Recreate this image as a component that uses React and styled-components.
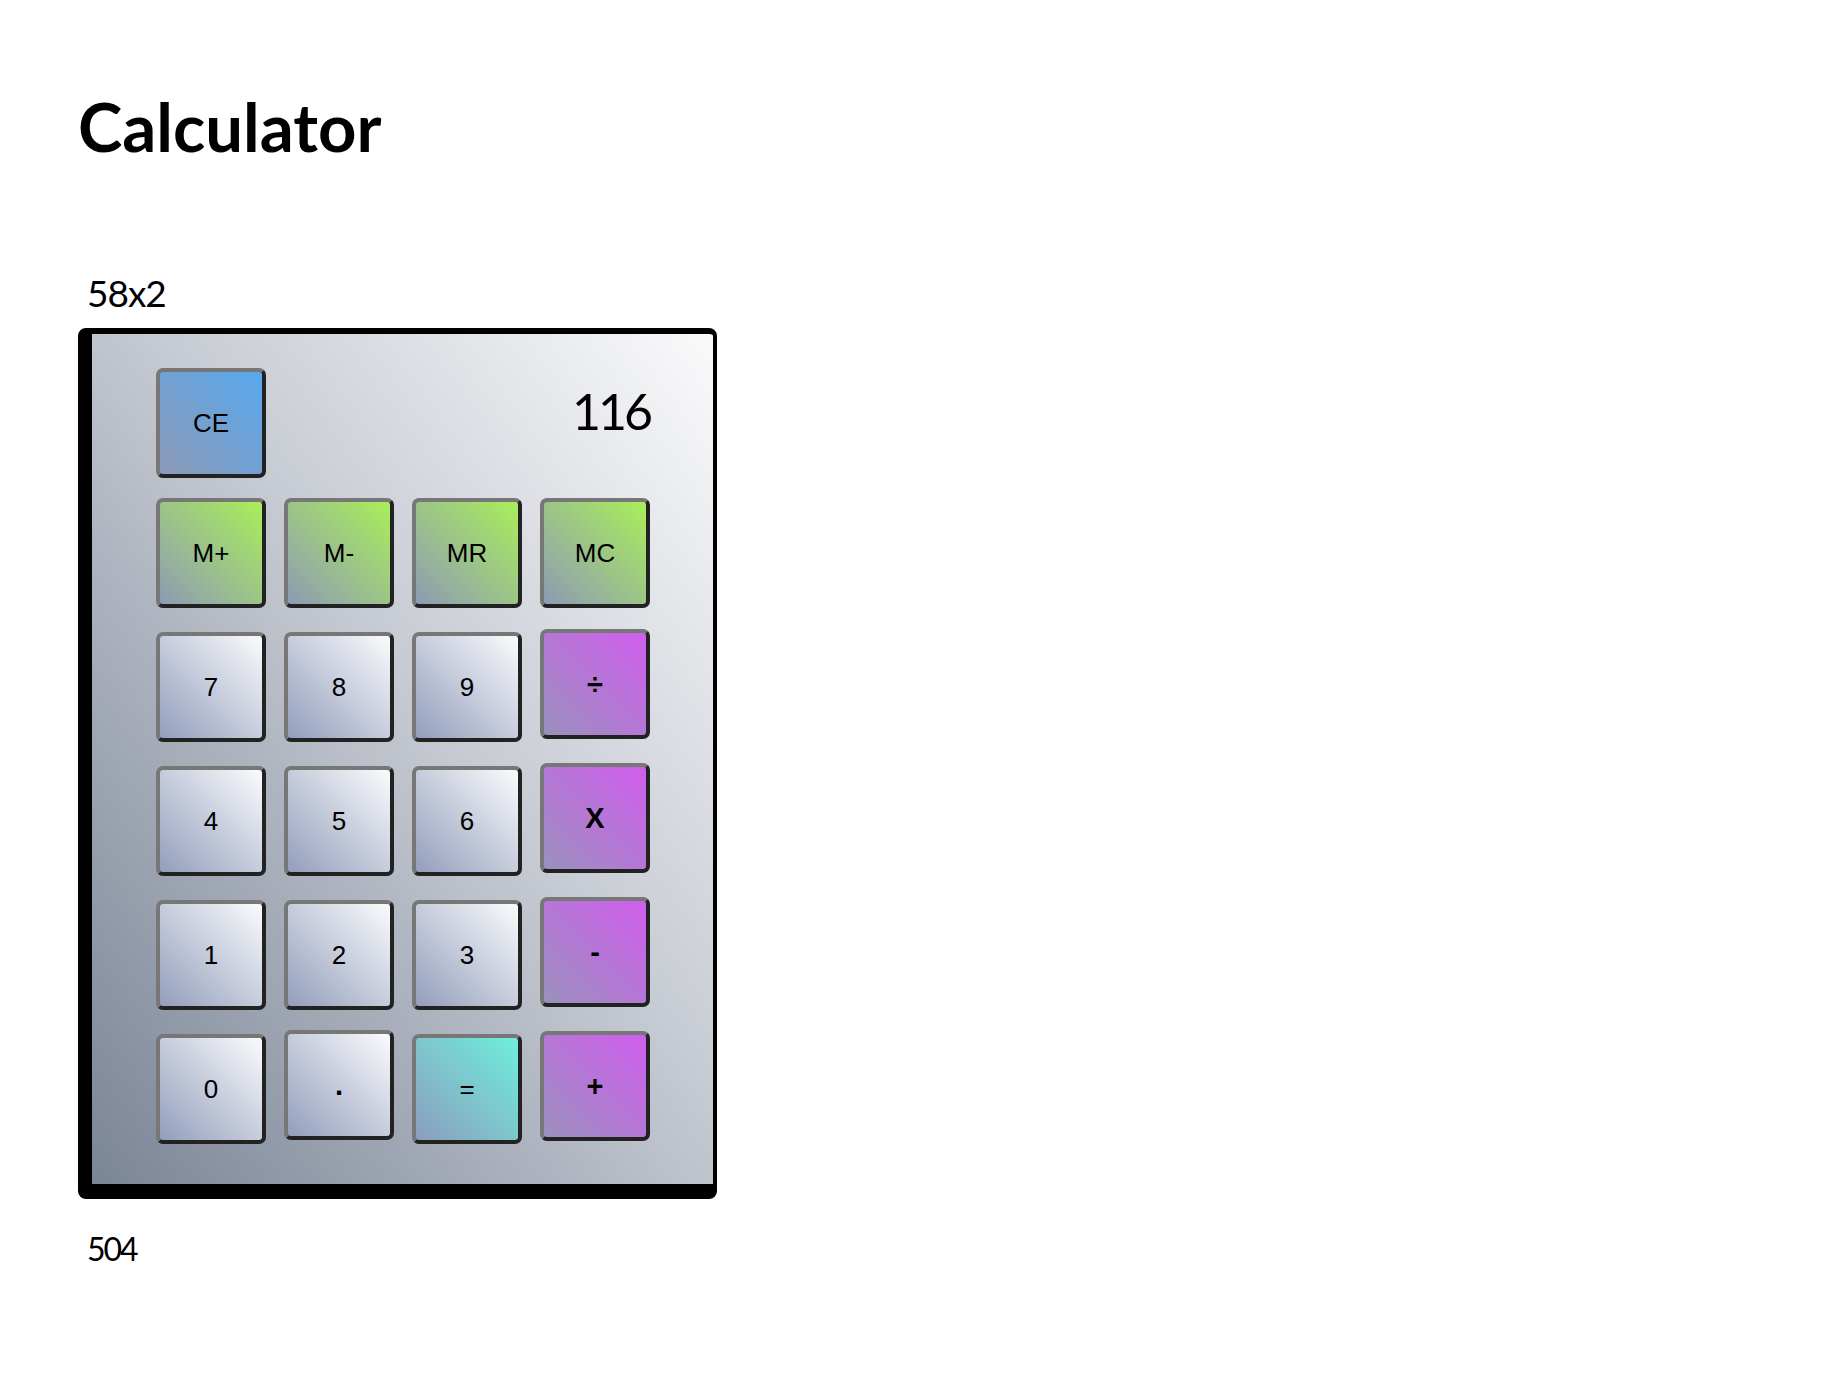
import React from 'react';
import styled, { createGlobalStyle } from 'styled-components';

const GlobalStyle = createGlobalStyle`
  html, body {
    margin: 0;
    padding: 0;
    background: #ffffff;
  }
  body {
    font-family: Lato, 'Liberation Sans', sans-serif;
    color: #000;
  }
`;

// key colours: [bottom-left, top-right]
const tones = {
  num: ['#939ebc', '#fafbfc'],
  clear: ['#8c99b6', '#58a8ee'],
  mem: ['#8d9bb4', '#aaee5a'],
  op: ['#9a90bd', '#d05eee'],
  equals: ['#8a9dbd', '#70eedc'],
};

const keys = [
  { label: 'M+', tone: 'mem' },
  { label: 'M-', tone: 'mem' },
  { label: 'MR', tone: 'mem' },
  { label: 'MC', tone: 'mem' },
  { label: '7', tone: 'num' },
  { label: '8', tone: 'num' },
  { label: '9', tone: 'num' },
  { label: '÷', tone: 'op', lift: 3, bold: true },
  { label: '4', tone: 'num' },
  { label: '5', tone: 'num' },
  { label: '6', tone: 'num' },
  { label: 'X', tone: 'op', lift: 3, bold: true },
  { label: '1', tone: 'num' },
  { label: '2', tone: 'num' },
  { label: '3', tone: 'num' },
  { label: '-', tone: 'op', lift: 3, bold: true },
  { label: '0', tone: 'num' },
  { label: '.', tone: 'num', lift: 4, bold: true },
  { label: '=', tone: 'equals' },
  { label: '+', tone: 'op', lift: 3, bold: true },
];

function App() {
  return (
    <Page>
      <GlobalStyle />
      <Title>Calculator</Title>
      <SizeLabel>58x2</SizeLabel>
      <Body>
        <TopRow>
          <Key $tone="clear">CE</Key>
          <Display>116</Display>
        </TopRow>
        <Pad>
          {keys.map((k) => (
            <Key key={k.label} $tone={k.tone} $lift={k.lift} $bold={k.bold}>
              {k.label}
            </Key>
          ))}
        </Pad>
      </Body>
      <Memory>504</Memory>
    </Page>
  );
}

export default App;

// styled-components
const Page = styled.div`
  display: flex;
  flex-direction: column;
  align-items: flex-start;
  padding: 93px 0 100px 78px;
`;

const Title = styled.h1`
  margin: 0;
  font-size: 67px;
  line-height: 1;
  font-weight: 700;
`;

const SizeLabel = styled.div`
  margin: 114px 0 0 9px;
  font-size: 37px;
  line-height: 1;
  letter-spacing: -1px;
`;

const Body = styled.div`
  box-sizing: border-box;
  width: 639px;
  margin-top: 17px;
  padding: 34px 63px 40px 64px;
  border-style: solid;
  border-color: #000;
  border-width: 6px 4px 15px 14px;
  border-radius: 8px;
  background: linear-gradient(to bottom left, #fafafb 0%, #c6cad2 45%, #7a8596 100%);
`;

const TopRow = styled.div`
  display: flex;
  justify-content: space-between;
  align-items: flex-start;
  margin-bottom: 20px;
`;

const Display = styled.div`
  padding-top: 18px;
  font-size: 50px;
  line-height: 1;
  letter-spacing: -3px;
`;

const Pad = styled.div`
  display: grid;
  grid-template-columns: repeat(4, 110px);
  column-gap: 18px;
  row-gap: 24px;
`;

const Key = styled.button`
  box-sizing: border-box;
  width: 110px;
  height: 110px;
  padding: 0;
  border: 4px solid;
  border-color: #777777 #222222 #222222 #777777;
  border-radius: 7px;
  background: ${({ $tone }) =>
    `linear-gradient(to top right, ${tones[$tone][0]}, ${tones[$tone][1]})`};
  font-family: 'Liberation Sans', Arial, sans-serif;
  font-size: ${({ $bold }) => ($bold ? 29 : 26)}px;
  font-weight: ${({ $bold }) => ($bold ? 700 : 400)};
  color: #000;
  cursor: pointer;
  transform: translateY(${({ $lift }) => -($lift || 0)}px);
`;

const Memory = styled.div`
  margin: 34px 0 0 9px;
  font-size: 32px;
  line-height: 1;
  letter-spacing: -2px;
`;
